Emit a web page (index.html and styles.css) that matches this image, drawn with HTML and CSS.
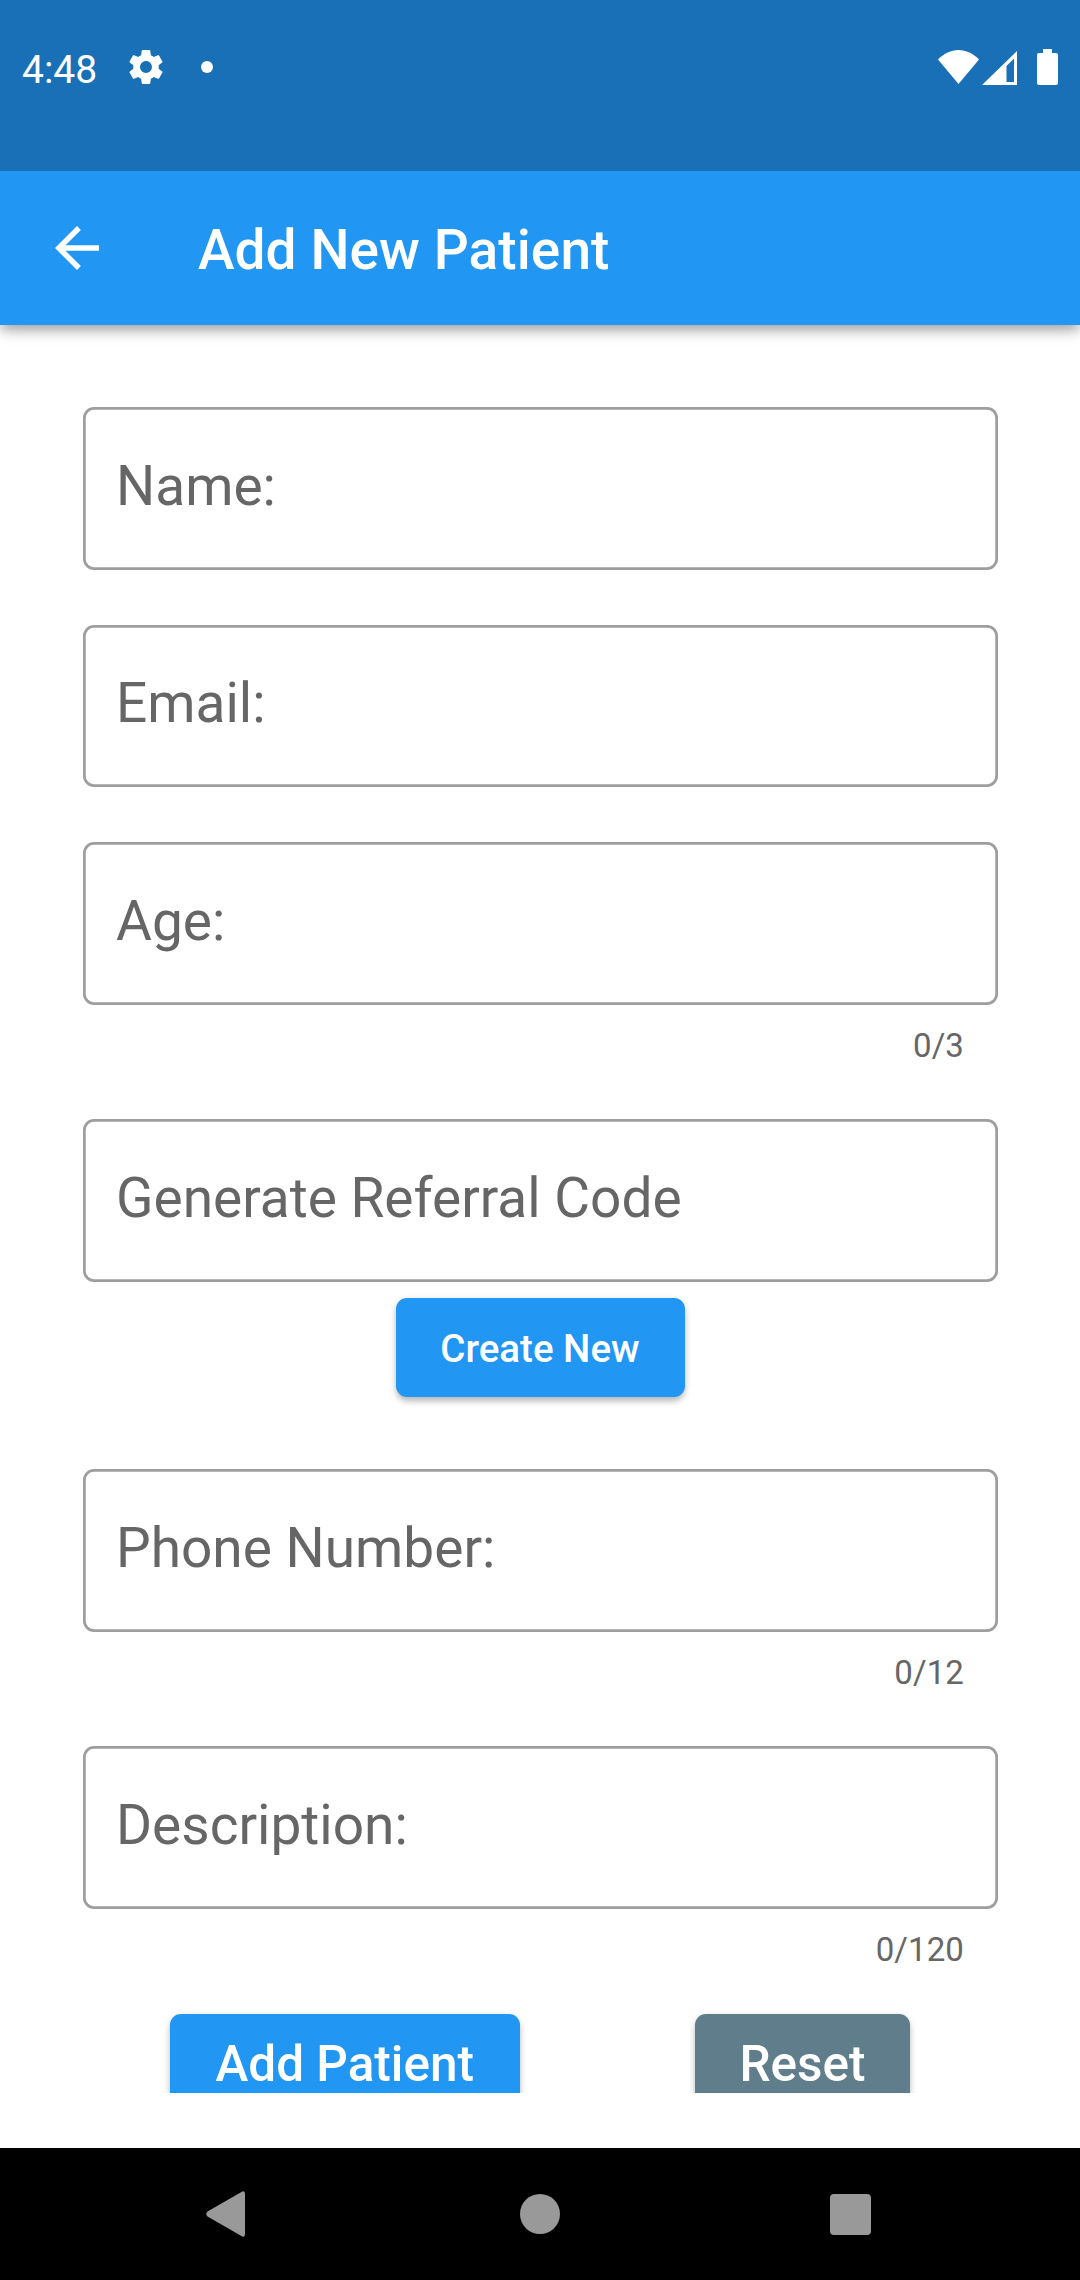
FILE: index.html
```html
<!DOCTYPE html>
<html lang="en">
<head>
<meta charset="utf-8">
<title>Add New Patient</title>
<link rel="stylesheet" href="styles.css">
</head>
<body>
<div class="screen">
  <div class="status-bar">
    <div class="status-left">
      <span class="clock">4:48</span>
      <svg class="gear" viewBox="2 2 20 20"><path d="M19.43 12.98c.04-.32.07-.64.07-.98s-.03-.66-.07-.98l2.11-1.65c.19-.15.24-.42.12-.64l-2-3.46c-.12-.22-.39-.3-.61-.22l-2.49 1c-.52-.4-1.080-.73-1.690-.98l-.38-2.650C14.460 2.180 14.250 2 14 2h-4c-.25 0-.46.18-.49.42l-.38 2.650c-.61.25-1.170.59-1.690.98l-2.490-1c-.23-.09-.49 0-.61.22l-2 3.460c-.13.22-.07.49.12.64l2.110 1.650c-.04.32-.07.65-.07.98s.03.66.07.98l-2.110 1.650c-.19.15-.24.42-.12.64l2 3.460c.12.22.39.3.61.22l2.490-1c.52.4 1.080.73 1.690.98l.38 2.650c.03.24.24.42.49.42h4c.25 0 .46-.18.49-.42l.38-2.650c.61-.25 1.170-.59 1.690-.98l2.490 1c.23.09.49 0 .61-.22l2-3.460c.12-.22.07-.49-.12-.64l-2.110-1.650zM12 15.500c-1.930 0-3.500-1.570-3.500-3.500s1.570-3.500 3.500-3.500 3.500 1.570 3.500 3.500-1.570 3.500-3.500 3.500z"/></svg>
      <span class="dot"></span>
    </div>
    <div class="status-right">
      <svg class="wifi" viewBox="0 0 41 34"><path d="M20.500 34L0 9.500C6 3.500 13 0 20.500 0S35 3.500 41 9.500z"/></svg>
      <svg class="signal" viewBox="0 0 35 34"><path fill-rule="evenodd" d="M35 0V34H0zM32 7.500L24.500 15V31H32z"/></svg>
      <svg class="battery" viewBox="0 0 21 36"><path d="M6 0h9v4h4q2 0 2 2v28q0 2-2 2H2q-2 0-2-2V6q0-2 2-2h4z"/></svg>
    </div>
  </div>
  <header class="app-bar">
    <svg class="back" viewBox="0 0 24 24"><path d="M20 11H7.830l5.590-5.590L12 4l-8 8 8 8 1.410-1.410L7.830 13H20z"/></svg>
    <h1 class="title">Add New Patient</h1>
  </header>
  <main class="form">
    <div class="field">Name:</div>
    <div class="field">Email:</div>
    <div class="group">
      <div class="field">Age:</div>
      <div class="counter">0/3</div>
    </div>
    <div class="group code">
      <div class="field">Generate Referral Code</div>
      <button class="button small">Create New</button>
    </div>
    <div class="group">
      <div class="field">Phone Number:</div>
      <div class="counter">0/12</div>
    </div>
    <div class="group">
      <div class="field">Description:</div>
      <div class="counter">0/120</div>
    </div>
    <div class="actions">
      <button class="button large">Add Patient</button>
      <button class="button large reset">Reset</button>
    </div>
  </main>
  <nav class="nav-bar">
    <svg class="nav-back" viewBox="0 0 39 46"><path d="M35 1.200Q39-1.500 39 3V43Q39 47.500 35 44.800L1.500 25.500Q-1 23 1.500 20.500z"/></svg>
    <span class="nav-home"></span>
    <span class="nav-recent"></span>
  </nav>
</div>
</body>
</html>
```
FILE: styles.css
```css
* { box-sizing: border-box; }
body { margin: 0; font-family: Roboto, sans-serif; background: #fff; }
svg { display: block; fill: #fff; }

.screen { width: 1080px; height: 2280px; display: flex; flex-direction: column; overflow: hidden; }

.status-bar { height: 171px; flex: none; background: #1a70b7; display: flex; justify-content: space-between; padding: 0 22px; color: #fff; z-index: 2; }
.status-left, .status-right { display: flex; align-items: center; height: 134px; }
.clock { font-size: 39px; line-height: 46px; width: 75px; margin-top: 6px; }
.gear { width: 34px; height: 34px; margin-left: 32px; }
.dot { width: 12px; height: 12px; border-radius: 50%; background: #fff; margin-left: 38px; }
.wifi { width: 41px; height: 34px; }
.signal { width: 35px; height: 34px; margin: 1px 20px 0 3px; }
.battery { width: 21px; height: 36px; }

.app-bar { height: 154px; flex: none; background: #2196f3; display: flex; align-items: center; padding-left: 44px; z-index: 1; box-shadow: 0 6px 11px -1px rgba(0,0,0,.3), 0 4px 20px rgba(0,0,0,.1); }
.back { width: 66px; height: 66px; }
.title { margin: 3px 0 0 88px; font-size: 55px; line-height: 64px; font-weight: 500; letter-spacing: .080px; color: #fff; }

.form { height: 1768px; flex: none; overflow: hidden; padding: 82.250px 82.500px 0; display: flex; flex-direction: column; }
.field { height: 162.250px; flex: none; border-radius: 11px; box-shadow: inset 0 0 0 2.750px #9e9e9e; padding: 46.250px 33px 0 33.500px; font-size: 55px; line-height: 64px; color: #666; margin-bottom: 55.250px; }
.group { height: 277px; flex: none; }
.group .field { margin-bottom: 21px; }
.counter { text-align: right; padding-right: 33.500px; font-size: 33px; line-height: 39px; letter-spacing: .100px; color: #666; }
.code { height: 350px; display: flex; flex-direction: column; align-items: center; }
.code .field { align-self: stretch; margin-bottom: 16.500px; }
.button { border: 0; padding: 0; border-radius: 11px; background: #2196f3; color: #fff; font-family: inherit; font-weight: 500; flex: none; box-shadow: 0 5px 7px -1px rgba(0,0,0,.25), 0 1px 7px rgba(0,0,0,.1); }
.small { width: 289px; height: 99px; font-size: 38.500px; padding-top: 1px; }
.large { height: 99px; font-size: 49.500px; width: 349.500px; padding-top: 1px; }
.reset { width: 215px; background: #607d8b; }
.actions { display: flex; justify-content: space-between; padding: 0 87.500px; margin-top: -9.750px; }

.nav-bar { margin-top: 55px; height: 132px; flex: none; background: #000; display: flex; align-items: center; padding-left: 206px; }
.nav-back { width: 39px; height: 46px; fill: #999; }
.nav-home { width: 40px; height: 40px; margin-left: 275px; border-radius: 50%; background: #999; }
.nav-recent { width: 41px; height: 41px; margin-left: 270px; border-radius: 4px; background: #999; }
```
